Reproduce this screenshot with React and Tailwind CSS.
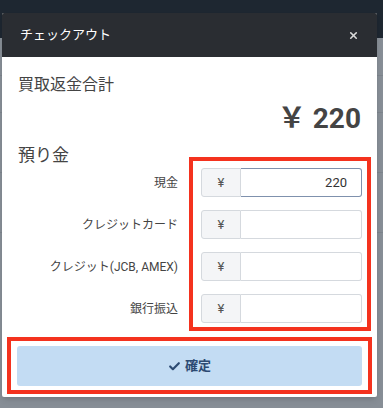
import React from "react";
import { Check, X } from "lucide-react";

const jp = { fontFamily: '"Roboto", "Noto Sans CJK JP", sans-serif' };

const rows = [
  { label: "現金", value: "220", focus: true },
  { label: "クレジットカード", value: "" },
  { label: "クレジット(JCB, AMEX)", value: "" },
  { label: "銀行振込", value: "" },
];

export default function App() {
  return (
    <div className="relative w-[383px] h-[408px] overflow-hidden bg-[#878e96]" style={jp}>
      {/* page behind the overlay */}
      <div className="h-[38px] bg-[#1e2731]"></div>
      <div className="flex flex-col">
        <div className="h-[38px] border-b border-[#7d848c]"></div>
        <div className="h-[37px] border-b border-[#7d848c]"></div>
        <div className="h-[60px] border-b border-[#7d848c]"></div>
        <div className="h-[60px] border-b border-[#7d848c]"></div>
      </div>

      {/* Modal */}
      <div className="absolute left-[2px] top-[13px] w-[375px] h-[384px] bg-white rounded-[2px] shadow-md flex flex-col">
        <div className="h-[44px] shrink-0 bg-[#2a2d32] flex items-center justify-between pl-[18px] pr-[18px] rounded-t-[2px]">
          <span className="text-white text-[13px]">チェックアウト</span>
          <X size={11} strokeWidth={3.5} className="text-[#d9d9d9]" />
        </div>

        <div className="flex flex-col pl-[16px] pr-[6px]">
          <div className="text-[16px] text-[#444] mt-[17px] leading-[22px]">買取返金合計</div>
          <div className="text-right text-[28px] font-bold text-[#444] leading-[34px] mt-[6px] pr-[10px]">￥ 220</div>
          <div className="text-[17px] text-[#444] leading-[24px] mt-[7px]">預り金</div>

          <div className="flex -mt-[10px]">
            <div className="w-[160px] shrink-0 flex flex-col pt-[11px] gap-[13px]">
              {rows.map((r, i) => (
                <div key={i} className="h-[29px] flex items-center justify-end text-[12px] text-[#444]">
                  {r.label}
                </div>
              ))}
            </div>
            <div className="ml-[11px] w-[182px] shrink-0 border-4 border-[#f4321e] pt-[7px] pb-[4px] pl-[8px] pr-[5px] flex flex-col gap-[13px]">
              {rows.map((r, i) => (
                <div key={i} className="flex h-[29px]">
                  <div className="w-[40px] flex items-center justify-center bg-[#f4f5f7] border border-[#d5d9de] rounded-l-[3px] text-[13px] text-[#555]">
                    ¥
                  </div>
                  <div
                    className={
                      "flex-1 flex items-center justify-end pr-[14px] border border-l-0 rounded-r-[3px] text-[13px] text-[#333] bg-white " +
                      (r.focus ? "border-[#7f91ad] border-l" : "border-[#d5d9de]")
                    }
                  >
                    {r.value}
                  </div>
                </div>
              ))}
            </div>
          </div>
        </div>

        <div className="mx-[5px] mt-[6px] border-4 border-[#f4321e] px-[6px] pt-[5px] pb-[4px] shrink-0">
          <button className="w-full h-[40px] bg-[#c3dcf3] rounded-[3px] flex items-center justify-center gap-[4px] text-[#2c4a72] text-[13px] font-bold">
            <Check size={13} strokeWidth={4} />
            確定
          </button>
        </div>
      </div>
    </div>
  );
}
